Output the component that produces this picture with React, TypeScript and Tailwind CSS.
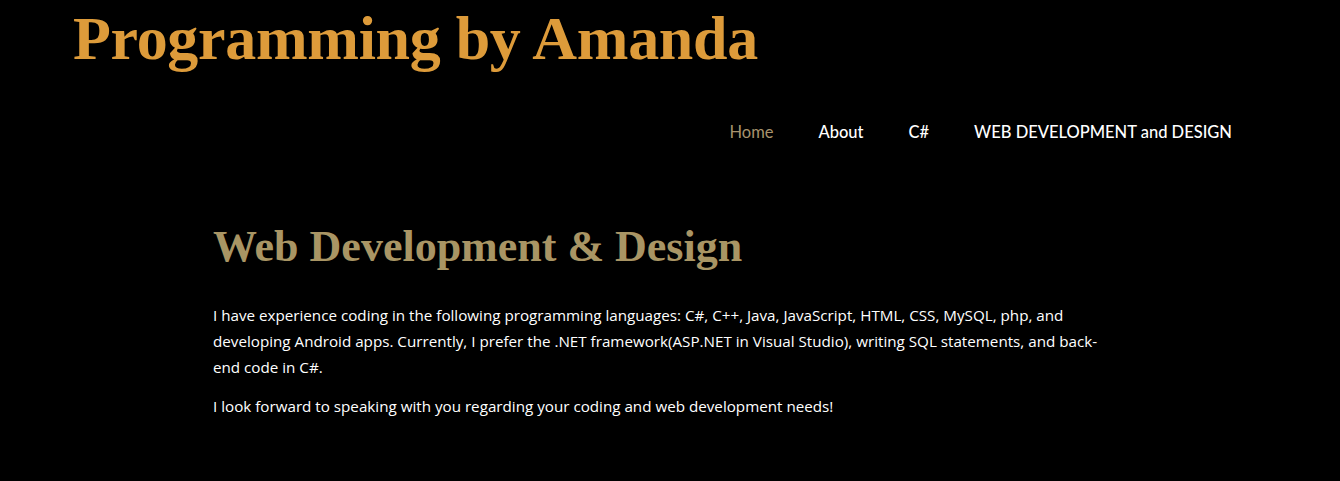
import React from 'react';

const navItems = [
  { label: 'Home', active: true },
  { label: 'About', active: false },
  { label: 'C#', active: false },
  { label: 'WEB DEVELOPMENT and DESIGN', active: false },
];

export default function App() {
  return (
    <div className="min-h-[481px] bg-black">
      {/* Site header */}
      <header className="pl-[73px] pr-[108px]">
        <h1 className="font-['Liberation_Serif',serif] text-[62px] font-bold leading-[76px] tracking-[-0.3px] text-[#dd9b3a]">
          Programming by Amanda
        </h1>
        <nav className="mt-[44px] flex justify-end gap-[45px] font-['Lato',sans-serif] text-[16.5px] leading-[24px]">
          {navItems.map((item) => (
            <a
              key={item.label}
              href="#"
              className={item.active ? 'text-[#a8936d]' : 'font-medium text-white'}
            >
              {item.label}
            </a>
          ))}
        </nav>
      </header>

      {/* Page content */}
      <main className="pl-[213px] pt-[73px]">
        <h2 className="font-['Liberation_Serif',serif] text-[44px] font-bold leading-[60px] text-[#a99564]">
          Web Development &amp; Design
        </h2>
        <div className="mt-[25px] max-w-[890px] font-['Open_Sans',sans-serif] text-[15.2px] leading-[26px] text-white">
          <p>
            I have experience coding in the following programming languages: C#, C++, Java, JavaScript, HTML, CSS,
            MySQL, php, and developing Android apps. Currently, I prefer the .NET framework(ASP.NET in Visual Studio),
            writing SQL statements, and back-end code in C#.
          </p>
          <p className="mt-[13px]">I look forward to speaking with you regarding your coding and web development needs!</p>
        </div>
      </main>
    </div>
  );
}
